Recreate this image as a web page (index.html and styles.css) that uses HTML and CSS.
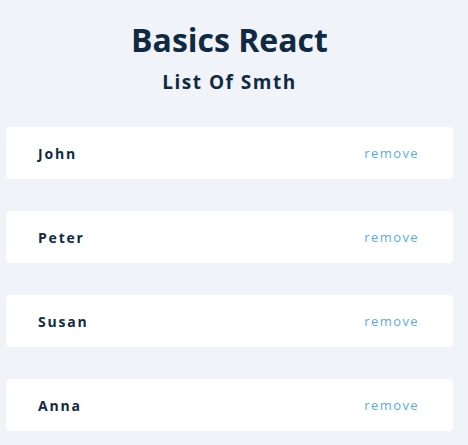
FILE: index.html
```html
<!DOCTYPE html>
<html>
<head>
<meta charset="utf-8">
<link rel="stylesheet" href="styles.css">
</head>
<body>
<main class="page">
  <h1 class="title">Basics React</h1>
  <h2 class="subtitle">List Of Smth</h2>
  <ul class="list">
    <li class="item"><span class="name">John</span><button class="remove">remove</button></li>
    <li class="item"><span class="name">Peter</span><button class="remove">remove</button></li>
    <li class="item"><span class="name">Susan</span><button class="remove">remove</button></li>
    <li class="item"><span class="name">Anna</span><button class="remove">remove</button></li>
  </ul>
</main>
</body>
</html>
```
FILE: styles.css
```css
html, body {
  margin: 0;
  padding: 0;
  background: #f0f4f8;
}
body {
  font-family: "Open Sans", "Noto Sans", sans-serif;
  color: #102a43;
}
.page {
  width: 447px;
  margin-left: 6px;
  padding-top: 18px;
}
.title {
  margin: 0;
  text-align: center;
  font-size: 32px;
  font-weight: 700;
  line-height: 44px;
  letter-spacing: 0;
}
.subtitle {
  margin: 7px 0 0;
  text-align: center;
  font-size: 19px;
  font-weight: 700;
  line-height: 26px;
  letter-spacing: 1.5px;
}
.list {
  list-style: none;
  margin: 32px 0 0;
  padding: 0;
  display: flex;
  flex-direction: column;
  gap: 32px;
}
.item {
  height: 52px;
  background: #fff;
  border-radius: 4px;
  display: flex;
  align-items: center;
  justify-content: space-between;
  padding: 0 34px 0 32px;
}
.name {
  font-size: 14px;
  font-weight: 700;
  letter-spacing: 1.8px;
}
.remove {
  background: none;
  border: none;
  padding: 0;
  font-family: "Open Sans", sans-serif;
  font-size: 13px;
  letter-spacing: 1.4px;
  color: #5aa9e6;
}
```
